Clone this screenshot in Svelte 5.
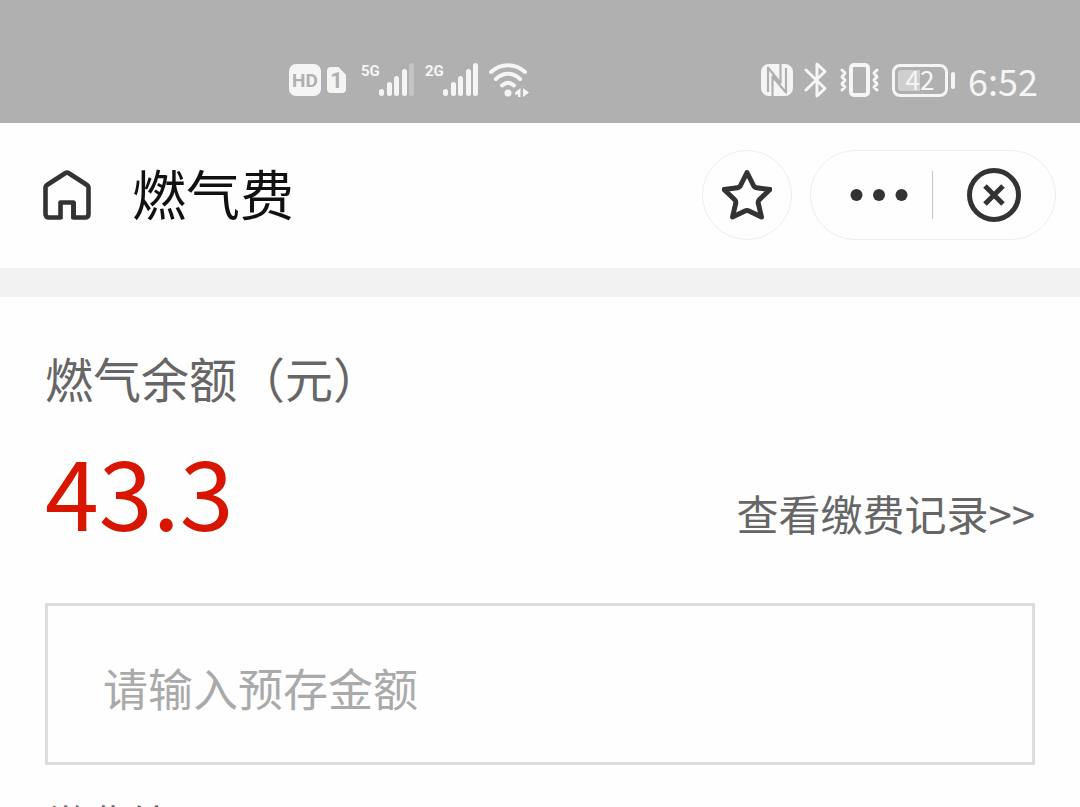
<script>
    let amount = '';
    let starred = false;

    const title = '燃气费';
    const balance = '43.3';

    const signals = [
        { label: '5G', strength: 4 },
        { label: '2G', strength: 5 }
    ];
    const bars = [
        { x: 0, h: 7 },
        { x: 8, h: 14 },
        { x: 15, h: 20 },
        { x: 23, h: 27 },
        { x: 30, h: 33 }
    ];

    const toggleStar = () => {
        starred = !starred;
    };
</script>

<div class="page">
    <div class="status-bar">
        <div class="status-left">
            <span class="hd">HD</span>
            <span class="sim">1</span>
            {#each signals as { label, strength }}
                <span class="signal">
                    <span class="network">{label}</span>
                    <svg width="36" height="34" viewBox="0 0 36 34">
                        {#each bars as { x, h }, i}
                            <rect {x} y={33 - h} width="5" height={h} rx="2.5" fill="#f5f5f5" opacity={i < strength ? 1 : 0.3} />
                        {/each}
                    </svg>
                </span>
            {/each}
            <svg width="42" height="36" viewBox="0 0 42 36" fill="none" stroke="#f5f5f5" stroke-width="4" stroke-linecap="round">
                <path d="M2 10C12 1 26 1 36 10" />
                <path d="M7 17C14 10 24 10 31 17" />
                <path d="M13 23.500C17 20 21 20 25 23.500" />
                <circle cx="19" cy="31" r="3.500" fill="#f5f5f5" stroke="none" />
                <path d="M31.500 26V35H29V32.500H26V30.500ZM34 26L40 30.500L34 35Z" fill="#f5f5f5" stroke="none" />
            </svg>
        </div>
        <div class="status-right">
            <svg width="34" height="34" viewBox="0 0 34 34">
                <rect x="1" y="1" width="32" height="32" rx="8" fill="#f5f5f5" />
                <path d="M8 29V4.500L20.500 20V1M12.500 33V13.500L26 29.500V5" fill="none" stroke="#b0b0b0" stroke-width="2.2" stroke-linejoin="round" />
            </svg>
            <svg class="bluetooth" width="24" height="38" viewBox="0 0 24 38" fill="none" stroke="#f5f5f5" stroke-width="3" stroke-linecap="round" stroke-linejoin="round">
                <path d="M2 9L21 27.500L13 35V3L21 10.500L2 29" />
            </svg>
            <svg class="vibrate" width="42" height="36" viewBox="0 0 42 36" fill="none" stroke="#f5f5f5" stroke-width="4" stroke-linecap="round" stroke-linejoin="round">
                <rect x="12" y="3" width="17" height="30" rx="3" />
                <path d="M3 8L6 11L3 15L6 18L3 22L6 25L3 28M38 8L35 11L38 15L35 18L38 22L35 25L38 28" stroke-width="3" />
            </svg>
            <span class="battery"><span class="level">42</span></span>
            <span class="time">6:52</span>
        </div>
    </div>

    <header>
        <button class="home" aria-label="首页">
            <svg width="50" height="52" viewBox="0 0 50 52" fill="none" stroke="#333" stroke-width="4.6" stroke-linejoin="round">
                <path d="M19.500 48.500H7Q3.500 48.500 3.500 45V18.500Q3.500 17 5 16L23.500 4Q25 3 26.500 4L45 16Q46.500 17 46.500 18.500V45Q46.500 48.500 43 48.500H31.500V33.500H18.500V50" />
                <path d="M31.500 33V50" />
            </svg>
        </button>
        <h1>{title}</h1>
        <button class="star" aria-label="收藏" aria-pressed={starred} on:click={toggleStar}>
            <svg width="50" height="52" viewBox="0 0 50 52" fill="none" stroke="#333" stroke-width="5" stroke-linejoin="round">
                <path d="M25 3.500L31.500 16.500Q32.500 18.500 34.500 18.700L48 20.500L37.500 30.500Q36 32 36.200 34L39.500 48L27 42Q25 41 23 42L10.500 48L13.800 34Q14 32 12.500 30.500L2 20.500L15.500 18.700Q17.500 18.500 18.500 16.500Z" />
            </svg>
        </button>
        <div class="capsule">
            <button class="more" aria-label="更多">
                <svg width="58" height="14" viewBox="0 0 58 14" fill="#333">
                    <circle cx="6.500" cy="7" r="6" />
                    <circle cx="29" cy="7" r="6" />
                    <circle cx="51.500" cy="7" r="6" />
                </svg>
            </button>
            <button class="close" aria-label="关闭">
                <svg width="54" height="54" viewBox="0 0 54 54" fill="none" stroke="#333" stroke-width="5">
                    <circle cx="27" cy="27" r="24.500" />
                    <path d="M18 18L36 36M36 18L18 36" />
                </svg>
            </button>
        </div>
    </header>

    <main>
        <p class="label">燃气余额（元）</p>
        <div class="balance-row">
            <span class="balance">{balance}</span>
            <a href="#records">查看缴费记录&gt;&gt;</a>
        </div>
        <input type="text" inputmode="decimal" aria-label="预存金额" placeholder="请输入预存金额" bind:value={amount} />
        <p class="note">缴费编号</p>
    </main>
</div>

<style>
    :global(body) {
        margin: 0;
        background: #fefefe;
    }
    .page {
        height: 100vh;
        overflow: hidden;
        font-family: "Noto Sans CJK SC", sans-serif;
    }
    svg {
        display: block;
        flex: none;
    }
    p,
    h1 {
        margin: 0;
        font-weight: 400;
    }
    button {
        padding: 0;
        border: none;
        background: none;
        display: flex;
        align-items: center;
        justify-content: center;
        cursor: pointer;
    }

    .status-bar {
        box-sizing: border-box;
        height: 123px;
        padding: 60px 42px 0 289px;
        display: flex;
        justify-content: space-between;
        background: #b0b0b0;
        color: #f5f5f5;
    }
    .status-left,
    .status-right {
        display: flex;
        align-items: center;
        height: 40px;
    }
    .hd,
    .sim {
        background: #f5f5f5;
        color: #b0b0b0;
        font-family: Roboto, sans-serif;
        font-weight: 700;
        text-align: center;
    }
    .hd {
        width: 32px;
        height: 32px;
        border-radius: 7px;
        font-size: 19px;
        line-height: 34px;
    }
    .sim {
        width: 19px;
        height: 26px;
        margin: 0 15px 0 6px;
        border-radius: 4px;
        clip-path: polygon(0 0, 60% 0, 100% 30%, 100% 100%, 0 100%);
        font-size: 22px;
        line-height: 28px;
    }
    .signal {
        display: flex;
        margin-right: 10px;
    }
    .network {
        width: 18px;
        font-family: Roboto, sans-serif;
        font-size: 15px;
        font-weight: 700;
        line-height: 17px;
    }
    .bluetooth {
        margin-left: 10px;
    }
    .vibrate {
        margin-left: 11px;
    }
    .battery {
        position: relative;
        box-sizing: border-box;
        width: 56px;
        height: 33px;
        margin: 0 20px 0 11px;
        padding: 3px;
        border: 3px solid #f5f5f5;
        border-radius: 8px;
    }
    .battery::after {
        content: "";
        position: absolute;
        top: 5px;
        right: -10px;
        width: 4px;
        height: 17px;
        border-radius: 2px;
        background: #f5f5f5;
    }
    .level {
        display: block;
        height: 21px;
        border-radius: 3px;
        background: linear-gradient(to right, #cfcfcf 50%, transparent 50%);
        font-size: 26px;
        line-height: 18px;
        text-align: center;
    }
    .time {
        font-size: 36px;
        line-height: 40px;
    }

    header {
        display: flex;
        align-items: center;
        height: 144px;
        padding: 0 24px 1px 42px;
        border-bottom: 29px solid #f2f2f2;
    }
    h1 {
        flex: 1;
        margin-left: 40px;
        padding-bottom: 5px;
        color: #111;
        font-size: 54px;
        line-height: 80px;
    }
    .star,
    .capsule {
        box-sizing: border-box;
        height: 90px;
        border: 1px solid #eee;
        border-radius: 45px;
    }
    .star {
        width: 90px;
        margin-right: 18px;
    }
    .capsule {
        display: flex;
        align-items: center;
        width: 246px;
    }
    .more {
        box-sizing: border-box;
        width: 122px;
        height: 48px;
        padding-left: 14px;
        border-right: 1px solid #c4c4c4;
    }
    .close {
        flex: 1;
    }

    main {
        padding: 45px 45px 0;
        color: #666;
    }
    .label {
        font-size: 48px;
        line-height: 70px;
    }
    .balance-row {
        display: flex;
        align-items: flex-end;
        justify-content: space-between;
        height: 131px;
        padding-bottom: 60px;
    }
    .balance {
        color: #d81500;
        font-size: 97px;
        line-height: 108px;
    }
    a {
        color: #666;
        font-size: 42px;
        line-height: 60px;
        text-decoration: none;
    }
    input {
        box-sizing: border-box;
        display: block;
        width: 100%;
        height: 162px;
        padding: 6px 55px 0;
        border: 3px solid #ddd;
        border-radius: 0;
        background: transparent;
        color: #333;
        font-family: inherit;
        font-size: 45px;
    }
    input::placeholder {
        color: #aaa;
        opacity: 1;
    }
    .note {
        margin-top: 28px;
        font-size: 42px;
        line-height: 60px;
    }
</style>
